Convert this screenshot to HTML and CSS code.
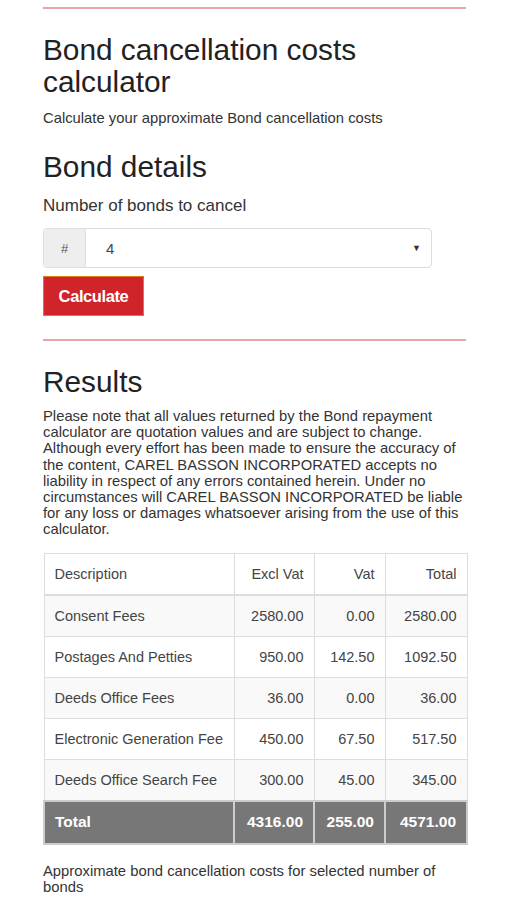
FILE: index.html
```html
<!DOCTYPE html>
<html>
<head>
<meta charset="utf-8">
<link rel="stylesheet" href="styles.css">
</head>
<body>
<div class="page">
  <hr class="rule">
  <h1 class="title">Bond cancellation costs calculator</h1>
  <p class="lead">Calculate your approximate Bond cancellation costs</p>
  <h2 class="section">Bond details</h2>
  <label class="label">Number of bonds to cancel</label>
  <div class="input-group">
    <span class="addon">#</span>
    <div class="select"><span>4</span><span class="caret">&#9660;</span></div>
  </div>
  <button class="btn">Calculate</button>
  <hr class="rule rule2">
  <h2 class="section results">Results</h2>
  <p class="note">Please note that all values returned by the Bond repayment calculator are quotation values and are subject to change. Although every effort has been made to ensure the accuracy of the content, CAREL BASSON INCORPORATED accepts no liability in respect of any errors contained herein. Under no circumstances will CAREL BASSON INCORPORATED be liable for any loss or damages whatsoever arising from the use of this calculator.</p>
  <table class="costs">
    <colgroup><col class="c1"><col class="c2"><col class="c3"><col class="c4"></colgroup>
    <thead>
      <tr><th>Description</th><th class="num">Excl Vat</th><th class="num">Vat</th><th class="num">Total</th></tr>
    </thead>
    <tbody>
      <tr><td>Consent Fees</td><td class="num">2580.00</td><td class="num">0.00</td><td class="num">2580.00</td></tr>
      <tr><td>Postages And Petties</td><td class="num">950.00</td><td class="num">142.50</td><td class="num">1092.50</td></tr>
      <tr><td>Deeds Office Fees</td><td class="num">36.00</td><td class="num">0.00</td><td class="num">36.00</td></tr>
      <tr><td>Electronic Generation Fee</td><td class="num">450.00</td><td class="num">67.50</td><td class="num">517.50</td></tr>
      <tr><td>Deeds Office Search Fee</td><td class="num">300.00</td><td class="num">45.00</td><td class="num">345.00</td></tr>
    </tbody>
    <tfoot>
      <tr><td>Total</td><td class="num">4316.00</td><td class="num">255.00</td><td class="num">4571.00</td></tr>
    </tfoot>
  </table>
  <p class="foot">Approximate bond cancellation costs for selected number of bonds</p>
</div>
</body>
</html>
```
FILE: styles.css
```css
html, body { margin: 0; padding: 0; background: #fff; }
body { font-family: "Liberation Sans", Arial, sans-serif; color: #333; }
.page { width: 423px; margin-left: 43px; padding-top: 7px; }
.rule { border: 0; border-top: 2px solid #e8a4aa; margin: 0; }
.title { font-size: 29.8px; font-weight: normal; color: #222; line-height: 32px; margin: 25px 0 0 0; }
.lead { font-size: 14.8px; margin: 11px 0 0 0; line-height: 18px; }
.section { font-size: 29.8px; font-weight: normal; color: #222; line-height: 32px; margin: 24px 0 0 0; }
.label { display: block; font-size: 17px; margin-top: 13px; line-height: 20px; }
.input-group { display: flex; width: 389px; height: 40px; margin-top: 12px; border: 1px solid #ddd; border-radius: 4px; box-sizing: border-box; overflow: hidden; }
.addon { width: 41px; background: #eee; border-right: 1px solid #ddd; display: flex; align-items: center; justify-content: center; font-size: 13px; color: #555; }
.select { flex: 1; display: flex; align-items: center; justify-content: space-between; padding: 0 10px 0 20px; font-size: 15px; color: #444; }
.caret { font-size: 9px; color: #333; }
.btn { display: block; margin-top: 8px; width: 101px; height: 40px; background: #d0232a; border: 1px solid #e07a1a; color: #fff; font-family: "Liberation Sans", Arial, sans-serif; font-size: 16.5px; font-weight: bold; padding: 0; letter-spacing: -0.4px; box-sizing: border-box; }
.rule2 { margin-top: 23px; }
.results { margin-top: 25px; }
.note { font-size: 14.8px; line-height: 16.2px; margin: 10px 0 0 0; color: #333; }
.costs { width: 423px; margin-top: 15px; border-collapse: collapse; font-size: 14.5px; table-layout: fixed; }
.c1 { width: 190px; } .c2 { width: 80px; } .c3 { width: 71px; } .c4 { width: 82px; }
.costs th, .costs td { border: 1px solid #ddd; padding: 0 10px; height: 40px; text-align: left; font-weight: normal; color: #444; white-space: nowrap; }
.costs thead th { border-bottom: 2px solid #ddd; }
.costs .num { text-align: right; }
.costs tbody tr:nth-child(odd) { background: #f9f9f9; }
.costs tfoot td { background: #777; color: #fff; font-weight: bold; font-size: 15.5px; height: 41px; border: 2px solid #ccc; }
.foot { font-size: 14.8px; line-height: 16.5px; margin: 18px 0 0 0; color: #333; }
```
